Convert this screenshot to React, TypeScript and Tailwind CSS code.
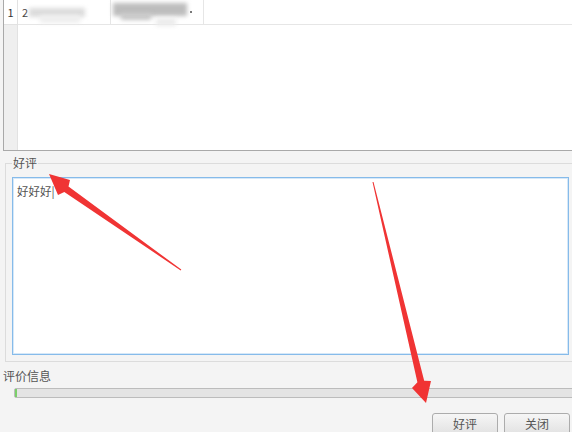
import React from 'react';

const font = { fontFamily: '"Noto Sans CJK SC", "Liberation Sans", sans-serif' };

function Arrows() {
  return (
    <svg className="pointer-events-none absolute left-0 top-0" width="572" height="432" viewBox="0 0 572 432">
      <g fill="#f03434" style={{ filter: 'blur(0.4px)' }}>
        {/* arrow pointing at the group label */}
        <polygon points="181.3,269.6 68.5,186.5 70,180 49,174 58,195 64.3,192.1 180.7,270.4" />
        {/* arrow pointing at the button */}
        <polygon points="372.5,182.1 417.4,382.3 412,388 426,403 431,381 424.2,380.7 373.5,181.9" />
      </g>
    </svg>
  );
}

function ResultTable() {
  return (
    <div className="ml-[3px] flex h-[151px] border-b border-l border-[#a9a9a9] bg-white">
      <div className="flex w-[14px] flex-col border-r border-[#e2e2e2] bg-[#efefef]">
        <div className="flex h-[25px] items-center justify-center border-b border-[#e2e2e2] bg-white text-[11px] text-[#333]">
          1
        </div>
      </div>
      <div className="flex-1">
        <div className="flex h-[25px] border-b border-[#e6e6e6]">
          <div className="relative flex w-[93px] items-center border-r border-[#e6e6e6] pl-[4px]">
            <span className="text-[11px] text-[#444]">2</span>
            <span className="ml-[1px] h-[9px] w-[56px] bg-[#dcdcdc] blur-[2px]" />
            <span className="absolute left-[22px] top-[15px] h-[8px] w-[40px] bg-[#eeeeee] blur-[2px]" />
          </div>
          <div className="relative flex w-[93px] items-center border-r border-[#e6e6e6]">
            <span className="ml-[2px] h-[13px] w-[74px] -translate-y-[3px] bg-[#bdbdbd] blur-[2px]" />
            <span className="ml-[3px] h-[2px] w-[2px] bg-[#777]" />
            <span className="absolute left-[10px] top-[13px] h-[7px] w-[30px] bg-[#c8c8c8] blur-[2px]" />
            <span className="absolute left-[45px] top-[18px] h-[8px] w-[20px] bg-[#ececec] blur-[2px]" />
          </div>
        </div>
      </div>
    </div>
  );
}

export default function App() {
  return (
    <div className="relative h-[432px] w-[572px] overflow-hidden bg-[#f4f4f4] text-[#333]" style={font}>
      <ResultTable />

      <fieldset className="ml-[5px] mr-[-20px] mt-[6px] border border-[#dcdcdc] pb-[6px] pl-[6px]">
        <legend className="ml-0 px-[1px] text-[12px] leading-[12px] text-[#555]">好评</legend>
        <div className="mt-[8px] h-[178px] w-[557px] border border-[#86bbea] bg-white px-[4px] pt-[6px] text-[11.5px] leading-[14px] text-[#555] shadow-[inset_0_0_0_1px_#d6e8f8]">
          好好好|
        </div>
      </fieldset>

      <div className="ml-[3px] mt-[8px] text-[12px] leading-[12px] text-[#555]">评价信息</div>

      <div className="ml-[14px] mr-[-10px] mt-[6px] flex h-[10px] items-stretch rounded-[2px] border border-[#bcbcbc] bg-[#e4e4e4]">
        <div className="w-[2px] bg-[#7bcf6a]" />
      </div>

      <div className="mt-[15px] flex justify-end gap-[6px] pr-[2px]">
        <button className="h-[22px] w-[66px] rounded-[3px] border border-[#acacac] bg-gradient-to-b from-[#f6f6f6] to-[#e2e2e2] text-[12px] text-[#555]">
          好评
        </button>
        <button className="h-[22px] w-[66px] rounded-[3px] border border-[#acacac] bg-gradient-to-b from-[#f6f6f6] to-[#e2e2e2] text-[12px] text-[#555]">
          关闭
        </button>
      </div>

      <Arrows />
    </div>
  );
}
